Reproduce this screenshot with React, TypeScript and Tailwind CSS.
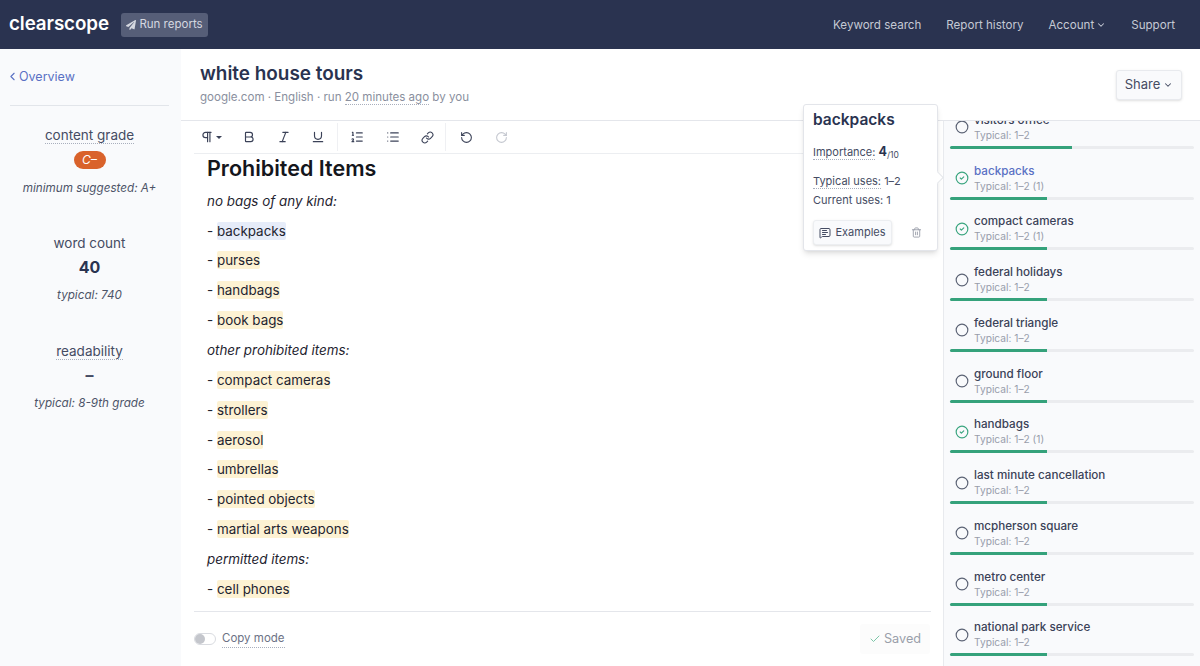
import React from "react";
import { ChevronDown, ChevronLeft, Bold, Italic, Underline, ListOrdered, List, Link, RotateCcw, RotateCw, Pilcrow, Check, CircleCheck, Circle, MessageSquareText, Trash2 } from "lucide-react";
import { FaPaperPlane } from "react-icons/fa";

const font = { fontFamily: "Inter, 'Noto Sans', sans-serif" };

const terms = [
  { n: "visitors office", t: "Typical: 1–2", w: 122, done: false },
  { n: "backpacks", t: "Typical: 1–2 (1)", w: 97, done: true, active: true },
  { n: "compact cameras", t: "Typical: 1–2 (1)", w: 97, done: true },
  { n: "federal holidays", t: "Typical: 1–2", w: 97, done: false },
  { n: "federal triangle", t: "Typical: 1–2", w: 97, done: false },
  { n: "ground floor", t: "Typical: 1–2", w: 97, done: false },
  { n: "handbags", t: "Typical: 1–2 (1)", w: 97, done: true },
  { n: "last minute cancellation", t: "Typical: 1–2", w: 97, done: false },
  { n: "mcpherson square", t: "Typical: 1–2", w: 97, done: false },
  { n: "metro center", t: "Typical: 1–2", w: 97, done: false },
  { n: "national park service", t: "Typical: 1–2", w: 97, done: false },
];

const lines: [string, string | null, boolean?][] = [
  ["italic", "no bags of any kind:"],
  ["- ", "backpacks", true],
  ["- ", "purses"],
  ["- ", "handbags"],
  ["- ", "book bags"],
  ["italic", "other prohibited items:"],
  ["- ", "compact cameras"],
  ["- ", "strollers"],
  ["- ", "aerosol"],
  ["- ", "umbrellas"],
  ["- ", "pointed objects"],
  ["- ", "martial arts weapons"],
  ["italic", "permitted items:"],
  ["- ", "cell phones"],
];

function Dotted({ children }: { children: React.ReactNode }) {
  return <span className="border-b border-dotted border-[#a9afbd]">{children}</span>;
}

export default function App() {
  return (
    <div style={font} className="relative w-[1200px] h-[666px] overflow-hidden bg-white flex flex-col text-[#2a3350]">
      <header className="h-[49px] shrink-0 bg-[#2a3350] flex items-center pl-[9px] pr-[25px]">
        <span className="w-[100px] text-[18.8px] font-semibold text-white tracking-[-0.1px]">clearscope</span>
        <button className="ml-[12px] h-[24px] w-[87px] rounded-[3px] bg-[#565e78] text-[#d5d8e0] text-[11.5px] flex items-center justify-center gap-[3px]">
          <FaPaperPlane size={10} />
          Run reports
        </button>
        <nav className="ml-auto pt-[2px] flex items-center gap-[25px] text-[11.6px] text-[#c5c9d4]">
          <span>Keyword search</span>
          <span>Report history</span>
          <span className="flex items-center gap-[2px]">Account <ChevronDown size={10} strokeWidth={2.5} /></span>
          <span>Support</span>
        </nav>
      </header>

      <div className="flex flex-1 min-h-0">
        <aside className="w-[181px] shrink-0 bg-[#f9fafc] pl-[10px] pr-[12px] flex flex-col items-center">
          <div className="w-full h-[57px] border-b border-[#e2e5ea] pt-[19px] flex items-start text-[12.5px] text-[#5a71c4]">
            <ChevronLeft size={13} strokeWidth={2} className="mt-[2px] -ml-[4px]" />
            Overview
          </div>
          <div className="mt-[19px] text-[13.5px] leading-[20px] text-[#454c63]"><Dotted>content grade</Dotted></div>
          <div className="mt-[6px] w-[32px] h-[18px] rounded-full bg-[#d9622b] text-white text-[12px] italic flex items-center justify-center">C–</div>
          <div className="mt-[11px] text-[11.7px] italic text-[#4d5468] leading-[16px]">minimum suggested: A+</div>
          <div className="mt-[37px] text-[13.5px] leading-[20px] text-[#454c63]">word count</div>
          <div className="mt-[2px] text-[16px] leading-[24px] font-bold text-[#2a3350]">40</div>
          <div className="mt-[8px] text-[11.7px] italic text-[#4d5468] leading-[16px]">typical: 740</div>
          <div className="mt-[38px] text-[13.5px] leading-[20px] text-[#454c63]"><Dotted>readability</Dotted></div>
          <div className="mt-[2px] text-[16px] leading-[24px] font-bold text-[#454c63]">–</div>
          <div className="mt-[8px] text-[11.7px] italic text-[#4d5468] leading-[16px]">typical: 8-9th grade</div>
        </aside>

        <main className="flex-1 min-w-0 flex flex-col">
          <div className="h-[72px] shrink-0 border-b border-[#e4e6eb] pl-[19px] pr-[18px] flex items-start justify-between">
            <div className="pt-[13px]">
              <h1 className="text-[18.9px] leading-[24px] font-semibold text-[#2a3350]">white house tours</h1>
              <p className="mt-[3px] text-[11.55px] leading-[16px] text-[#8a8f9e]">google.com · English · run <Dotted>20 minutes ago</Dotted> by you</p>
            </div>
            <button className="mt-[21px] w-[66px] h-[30px] rounded-[3px] border border-[#e8eaee] bg-[#f9fafc] shadow-sm text-[13px] text-[#454c63] flex items-center justify-center gap-[3px]">
              Share <ChevronDown size={10} strokeWidth={2.5} />
            </button>
          </div>

          <div className="flex flex-1 min-h-0">
            <div className="w-[762px] shrink-0 flex flex-col pl-[13px] pr-[12px]">
              <div className="h-[33px] shrink-0 border-b border-[#eceef1] flex items-center text-[#3b4258]">
                <span className="w-[36px] flex items-center justify-center -ml-[1px]"><Pilcrow size={14} /><span className="ml-[2px] w-0 h-0 border-x-[3px] border-x-transparent border-t-[3px] border-t-[#3b4258]" /></span>
                <span className="w-[35px] ml-[2px] flex justify-center"><Bold size={14} /></span>
                <span className="w-[35px] flex justify-center"><Italic size={14} /></span>
                <span className="w-[35px] -ml-[1px] flex justify-center"><Underline size={14} /></span>
                <span className="w-px h-[28px] bg-[#eff0f3] ml-[2px]" />
                <span className="w-[35px] flex justify-center ml-[1px]"><ListOrdered size={14} /></span>
                <span className="w-[35px] flex justify-center ml-[1px]"><List size={14} /></span>
                <span className="w-[35px] flex justify-center"><Link size={13} /></span>
                <span className="w-px h-[28px] bg-[#eff0f3]" />
                <span className="w-[38px] flex justify-center ml-[1px]"><RotateCcw size={13} /></span>
                <span className="w-[35px] -ml-[1px] flex justify-center text-[#c5c8d0]"><RotateCw size={13} /></span>
              </div>
              <div className="flex-1 min-h-0 overflow-hidden pl-[13px] border-b border-[#e4e6eb] text-[#1f2430]">
                <h2 className="-mt-[1px] text-[21.5px] leading-[30px] font-semibold text-[#14161c]">Prohibited Items</h2>
                <div className="mt-[3.8px] text-[13.4px]">
                  {lines.map(([a, b, act], i) => (
                    <div key={i} className="h-[29.85px] leading-[29.85px]">
                      {a === "italic" ? (
                        <span className="italic">{b}</span>
                      ) : (
                        <>
                          - <span className={(act ? "bg-[#e6ecf9]" : "bg-[#fdf2d3]") + " py-[1px] rounded-[2px]"}>{b}</span>
                        </>
                      )}
                    </div>
                  ))}
                </div>
              </div>
              <div className="h-[54px] shrink-0 flex items-center justify-between pr-[1px]">
                <div className="flex items-center gap-[6px] text-[11.5px] text-[#6c7285]">
                  <span className="w-[22px] h-[12px] rounded-full bg-white border border-[#d9dbe0] relative flex items-center">
                    <span className="w-[10px] h-[10px] rounded-full bg-[#c4c6cc]" />
                  </span>
                  <Dotted>Copy mode</Dotted>
                </div>
                <div className="w-[70px] h-[30px] rounded-[3px] bg-[#fcfcfc] text-[12.7px] text-[#9a9faa] flex items-center justify-center gap-[3px]">
                  <Check size={12} className="text-[#7cc7a8]" /> Saved
                </div>
              </div>
            </div>

            <div className="flex-1 min-w-0 border-l border-[#e8eaee] bg-[#f9fafc] overflow-hidden">
              <div className="-mt-[23px] pl-[6px] pr-[6px]">
                {terms.map((t) => (
                  <div key={t.n} className="h-[50.75px] flex flex-col justify-end">
                    <div className="flex items-center pl-[6px]">
                      <span className="w-[12px] h-[12px] flex items-center justify-center">
                        {t.done ? (
                          <CircleCheck size={14} className="text-[#3aa57f] shrink-0" />
                        ) : (
                          <Circle size={14} className="text-[#5b6274] shrink-0" />
                        )}
                      </span>
                      <div className="ml-[6px]">
                        <div className={"text-[11.65px] leading-[14px] font-medium " + (t.active ? "text-[#5a71c4]" : "text-[#3b4258]")}>{t.n}</div>
                        <div className="mt-[1px] text-[10.2px] leading-[14px] text-[#989dab]">{t.t}</div>
                      </div>
                    </div>
                    <div className="mt-[4px] h-[3px] rounded-full bg-[#ebecef]">
                      <div className="h-full bg-[#35a27b] rounded-l-full" style={{ width: t.w }} />
                    </div>
                  </div>
                ))}
              </div>
            </div>
          </div>
        </main>
      </div>

      <div className="absolute left-[803px] top-[104px] w-[135px] h-[147px] bg-white rounded-[3px] border border-[#e3e5ea] shadow-md px-[9px] pt-[5px]">
        <div className="text-[15.5px] leading-[20px] font-semibold text-[#2a3350]">backpacks</div>
        <div className="mt-[13px] text-[11px] leading-[18px] text-[#454c63]">
          <Dotted>Importance:</Dotted> <b className="text-[12.5px] text-[#2a3350]">4</b><span className="text-[8.5px] relative top-[2px]">/10</span>
        </div>
        <div className="mt-[10px] text-[11px] leading-[18px] text-[#454c63]"><Dotted>Typical uses:</Dotted> 1–2</div>
        <div className="mt-[1px] text-[11px] leading-[18px] text-[#454c63]">Current uses: 1</div>
        <div className="mt-[11px] flex items-center justify-between pr-[6px]">
          <button className="w-[79px] h-[25px] rounded-[3px] border border-[#eceef1] bg-[#f9fafc] shadow-sm text-[11px] text-[#454c63] flex items-center justify-center gap-[4px]">
            <MessageSquareText size={12} /> Examples
          </button>
          <Trash2 size={11} className="text-[#9a9faa]" />
        </div>
        <span className="absolute -right-[5px] top-[68px] w-[9px] h-[9px] rotate-45 bg-white border-t border-r border-[#e3e5ea]" />
      </div>
    </div>
  );
}
